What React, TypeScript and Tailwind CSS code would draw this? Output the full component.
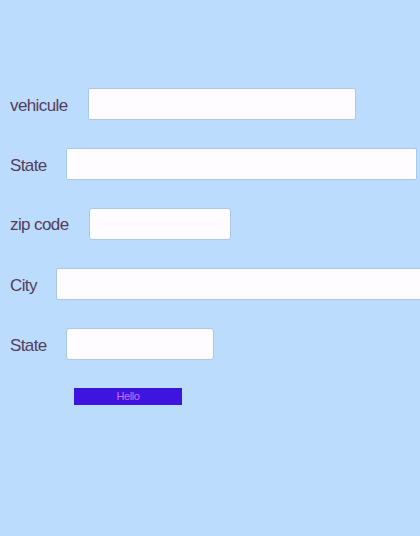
import React from "react";

const rows = [
  { label: "vehicule", lw: "w-[78px]", iw: "w-[268px]", r: "rounded-[2px]", mt: "mt-[8px]" },
  { label: "State", lw: "w-[56px]", iw: "w-[351px]", r: "rounded-[2px]", mt: "mt-[8px]" },
  { label: "zip code", lw: "w-[79px]", iw: "w-[142px]", r: "rounded-[3px]", mt: "mt-[7px]" },
  { label: "City", lw: "w-[46px]", iw: "w-[366px]", r: "rounded-[2px]", mt: "mt-[8px]" },
  { label: "State", lw: "w-[56px]", iw: "w-[148px]", r: "rounded-[3px]", mt: "mt-[8px]" },
];

export default function App() {
  return (
    <div
      className="w-[420px] h-[536px] overflow-hidden bg-[#bcdcfe] pt-[88px] pl-[10px] flex flex-col gap-[28px]"
      style={{ fontFamily: '"Liberation Sans", Arial, sans-serif' }}
    >
      {rows.map((r, i) => (
        <div key={i} className="flex items-start h-[32px] shrink-0">
          <label
            className={`${r.lw} ${r.mt} shrink-0 text-[17px] leading-[20px] tracking-[-0.6px] text-[#553c5a]`}
          >
            {r.label}
          </label>
          <input
            type="text"
            className={`${r.iw} shrink-0 h-[32px] bg-[#fefcff] border border-[#a9c8ec] ${r.r} outline-none`}
          />
        </div>
      ))}
      <div className="flex pl-[64px] shrink-0">
        <button className="block w-[108px] h-[17px] bg-[#3d15df] text-[#d06ef6] text-[11px] leading-[17px] tracking-[-0.4px]">
          Hello
        </button>
      </div>
    </div>
  );
}
